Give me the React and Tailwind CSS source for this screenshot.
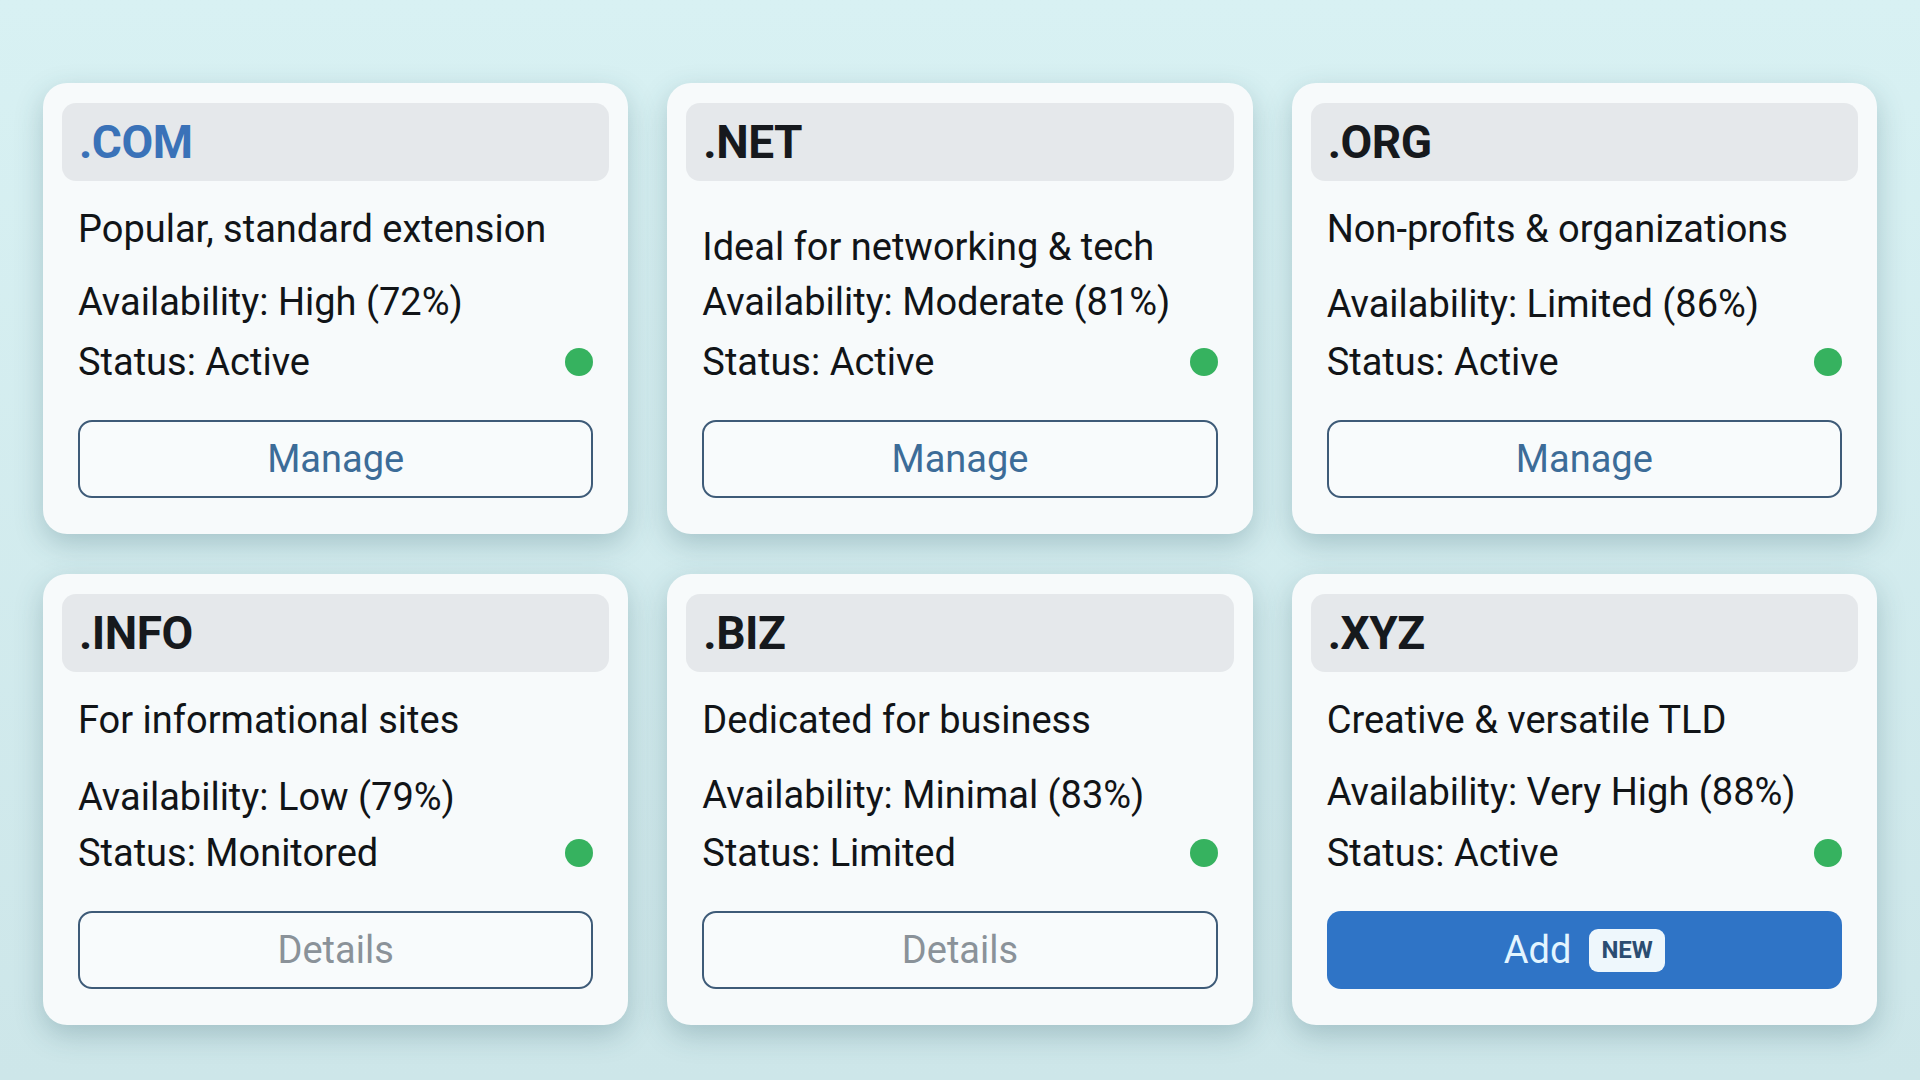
const DOMAINS = [
  { tld: '.COM', accent: true, desc: 'Popular, standard extension', avail: 'High (72%)', status: 'Active', action: 'Manage' },
  { tld: '.NET', desc: 'Ideal for networking & tech', avail: 'Moderate (81%)', status: 'Active', action: 'Manage', descMt: 'mt-[44px]', availMt: 'mt-[11px]' },
  { tld: '.ORG', desc: 'Non-profits & organizations', avail: 'Limited (86%)', status: 'Active', action: 'Manage', availMt: 'mt-[31px]', statusMt: 'mt-[14px]' },
  { tld: '.INFO', desc: 'For informational sites', avail: 'Low (79%)', status: 'Monitored', action: 'Details', availMt: 'mt-[33px]', statusMt: 'mt-[12px]' },
  { tld: '.BIZ', desc: 'Dedicated for business', avail: 'Minimal (83%)', status: 'Limited', action: 'Details', availMt: 'mt-[31px]', statusMt: 'mt-[14px]' },
  { tld: '.XYZ', desc: 'Creative & versatile TLD', avail: 'Very High (88%)', status: 'Active', action: 'Add', isNew: true, availMt: 'mt-[28px]', statusMt: 'mt-[17px]' },
]

function ActionButton({ label, isNew }) {
  if (isNew) {
    return (
      <button className="h-[78px] w-full rounded-[14px] bg-[#2f74c6] flex items-center justify-center gap-[18px]">
        <span className="text-[38px] text-[#e3f5ff] leading-none">{label}</span>
        <span className="h-[43px] px-[12px] rounded-[9px] bg-[#eef7fc] flex items-center text-[24px] font-bold text-[#2b4d72] leading-none">
          NEW
        </span>
      </button>
    )
  }

  const tone = label === 'Details' ? 'text-[#8a9299]' : 'text-[#3c6c98]'
  return (
    <button className={`h-[78px] w-full rounded-[14px] border-2 border-[#3e5b78] bg-[#f8fbfc] text-[38px] leading-none ${tone}`}>
      {label}
    </button>
  )
}

function DomainCard({ d }) {
  return (
    <div className="h-[451px] rounded-[24px] bg-[#f7fafb] shadow-[0_10px_28px_rgba(40,85,95,0.26)] pt-[20px] flex flex-col">
      <div className="mx-[19px] h-[78px] rounded-[14px] bg-[#e5e8eb] px-[17px] flex items-center">
        <h2 className={`text-[46px] font-bold tracking-[-0.5px] leading-none ${d.accent ? 'text-[#3a72b8]' : 'text-[#16191d]'}`}>
          {d.tld}
        </h2>
      </div>

      <div className="px-[35px] flex flex-col text-[38px] text-[#111417] leading-[44px]">
        <p className={d.descMt || 'mt-[26px]'}>{d.desc}</p>
        <p className={d.availMt || 'mt-[29px]'}>Availability: {d.avail}</p>
        <div className={`flex items-center justify-between ${d.statusMt || 'mt-[16px]'}`}>
          <p>Status: {d.status}</p>
          <span className="w-[28px] h-[28px] rounded-full bg-[#36b25f]" />
        </div>
        <div className="mt-[36px]">
          <ActionButton label={d.action} isNew={d.isNew} />
        </div>
      </div>
    </div>
  )
}

export default function App() {
  return (
    <div className="w-[1920px] h-[1080px] overflow-hidden bg-gradient-to-b from-[#d8f1f3] to-[#cde6e9] font-['Roboto',sans-serif] px-[43px] pt-[83px]">
      <div className="grid grid-cols-3 gap-x-[39px] gap-y-[40px]">
        {DOMAINS.map(d => (
          <DomainCard key={d.tld} d={d} />
        ))}
      </div>
    </div>
  )
}
